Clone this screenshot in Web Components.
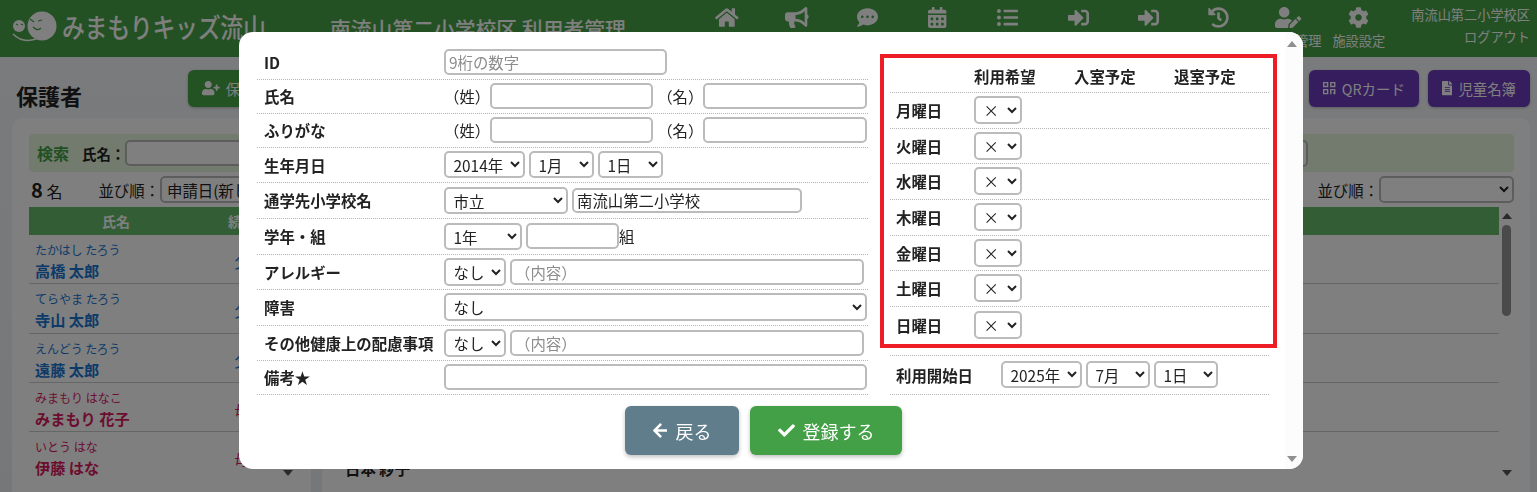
<!DOCTYPE html>
<html lang="ja">
<head>
<meta charset="utf-8">
<title>保護者</title>
<style>
  html, body { margin: 0; height: 492px; overflow: hidden; }
  body {
    font-family: "Noto Sans CJK JP", "Noto Sans", sans-serif;
    font-size: 15.4px;
    color: #222;
    background: linear-gradient(#f4f7fa, #eceff2);
  }
</style>
</head>
<body>
<app-header></app-header>
<page-toolbar></page-toolbar>
<list-area></list-area>
<modal-dialog></modal-dialog>

<script>
const ICONS = {
  home: [576, "M280.37 148.26L96 300.11V464a16 16 0 0 0 16 16l112.06-.29a16 16 0 0 0 15.92-16V368a16 16 0 0 1 16-16h64a16 16 0 0 1 16 16v95.64a16 16 0 0 0 16 16.05L464 480a16 16 0 0 0 16-16V300L295.67 148.26a12.19 12.19 0 0 0-15.3 0zM571.6 251.47L488 182.56V44.05a12 12 0 0 0-12-12h-56a12 12 0 0 0-12 12v72.61L318.47 43a48 48 0 0 0-61 0L4.34 251.47a12 12 0 0 0-1.6 16.9l25.5 31A12 12 0 0 0 45.15 301l235.22-193.74a12.19 12.19 0 0 1 15.3 0L530.9 301a12 12 0 0 0 16.9-1.6l25.5-31a12 12 0 0 0-1.7-16.93z"],
  bullhorn: [576, "M576 240c0-23.63-12.95-44.04-32-55.12V32.01C544 23.26 537.02 0 512 0c-7.12 0-14.19 2.38-19.98 7.02l-85.03 68.03C364.28 109.19 310.66 128 256 128H64c-35.35 0-64 28.65-64 64v96c0 35.35 28.65 64 64 64h33.7c-1.39 10.48-2.18 21.14-2.18 32 0 39.77 9.26 77.35 25.56 110.94 5.19 10.69 16.52 17.06 28.4 17.06h74.28c26.05 0 41.69-29.84 25.9-50.56-16.4-21.52-26.15-48.36-26.15-77.44 0-11.11 1.62-21.79 4.41-32H256c54.66 0 108.28 18.81 150.98 52.95l85.03 68.03a32.023 32.023 0 0 0 19.98 7.02c24.92 0 32-22.78 32-32V295.13C563.05 284.04 576 263.63 576 240zm-96 141.42l-33.05-26.44C392.95 311.78 325.12 288 256 288v-96c69.12 0 136.95-23.78 190.95-66.98L480 98.58v282.84z"],
  comment: [512, "M256 32C114.6 32 0 125.1 0 240c0 49.6 21.4 95 57 130.7C44.5 421.1 2.7 466 2.2 466.5c-2.2 2.3-2.8 5.7-1.5 8.7S4.8 480 8 480c66.3 0 116-31.8 140.6-51.4 32.7 12.3 69 19.4 107.4 19.4 141.4 0 256-93.1 256-208S397.4 32 256 32zM128 272c-17.7 0-32-14.3-32-32s14.3-32 32-32 32 14.3 32 32-14.3 32-32 32zm128 0c-17.7 0-32-14.3-32-32s14.3-32 32-32 32 14.3 32 32-14.3 32-32 32zm128 0c-17.7 0-32-14.3-32-32s14.3-32 32-32 32 14.3 32 32-14.3 32-32 32z"],
  calendar: [448, "M0 464c0 26.5 21.5 48 48 48h352c26.5 0 48-21.5 48-48V192H0v272zm320-196c0-6.6 5.4-12 12-12h40c6.6 0 12 5.4 12 12v40c0 6.6-5.4 12-12 12h-40c-6.6 0-12-5.4-12-12v-40zm0 128c0-6.6 5.4-12 12-12h40c6.6 0 12 5.4 12 12v40c0 6.6-5.4 12-12 12h-40c-6.6 0-12-5.4-12-12v-40zM192 268c0-6.6 5.4-12 12-12h40c6.6 0 12 5.4 12 12v40c0 6.6-5.4 12-12 12h-40c-6.6 0-12-5.4-12-12v-40zm0 128c0-6.6 5.4-12 12-12h40c6.6 0 12 5.4 12 12v40c0 6.6-5.4 12-12 12h-40c-6.6 0-12-5.4-12-12v-40zM64 268c0-6.6 5.4-12 12-12h40c6.6 0 12 5.4 12 12v40c0 6.6-5.4 12-12 12H76c-6.6 0-12-5.4-12-12v-40zm0 128c0-6.6 5.4-12 12-12h40c6.6 0 12 5.4 12 12v40c0 6.6-5.4 12-12 12H76c-6.6 0-12-5.4-12-12v-40zM400 64h-48V16c0-8.8-7.2-16-16-16h-32c-8.8 0-16 7.2-16 16v48H160V16c0-8.8-7.2-16-16-16h-32c-8.8 0-16 7.2-16 16v48H48C21.5 64 0 85.5 0 112v48h448v-48c0-26.5-21.5-48-48-48z"],
  list: [512, "M48 48a48 48 0 1 0 48 48 48 48 0 0 0-48-48zm0 160a48 48 0 1 0 48 48 48 48 0 0 0-48-48zm0 160a48 48 0 1 0 48 48 48 48 0 0 0-48-48zm448 16H176a16 16 0 0 0-16 16v32a16 16 0 0 0 16 16h320a16 16 0 0 0 16-16v-32a16 16 0 0 0-16-16zm0-320H176a16 16 0 0 0-16 16v32a16 16 0 0 0 16 16h320a16 16 0 0 0 16-16V80a16 16 0 0 0-16-16zm0 160H176a16 16 0 0 0-16 16v32a16 16 0 0 0 16 16h320a16 16 0 0 0 16-16v-32a16 16 0 0 0-16-16z"],
  signin: [512, "M416 448h-84c-6.6 0-12-5.4-12-12v-40c0-6.6 5.4-12 12-12h84c17.7 0 32-14.3 32-32V160c0-17.7-14.3-32-32-32h-84c-6.6 0-12-5.4-12-12V76c0-6.6 5.4-12 12-12h84c53 0 96 43 96 96v192c0 53-43 96-96 96zm-47-201L201 79c-15-15-41-4.5-41 17v96H24c-13.3 0-24 10.7-24 24v96c0 13.3 10.7 24 24 24h136v96c0 21.5 26 32 41 17l168-168c9.3-9.4 9.3-24.6 0-34z"],
  history: [512, "M504 255.531c.253 136.64-111.18 248.372-247.82 248.468-59.015.042-113.223-20.53-155.822-54.911-11.077-8.94-11.905-25.541-1.839-35.607l11.267-11.267c8.609-8.609 22.353-9.551 31.891-1.984C173.062 425.135 212.781 440 256 440c101.705 0 184-82.311 184-184 0-101.705-82.311-184-184-184-48.814 0-93.149 18.969-126.068 49.932l50.754 50.754c10.08 10.08 2.941 27.314-11.313 27.314H24c-8.837 0-16-7.163-16-16V38.627c0-14.254 17.234-21.393 27.314-11.314l49.372 49.372C129.209 34.136 189.552 8 256 8c136.81 0 247.747 110.78 248 247.531zm-180.912 78.784l9.823-12.63c8.138-10.463 6.253-25.542-4.21-33.679L288 256.349V152c0-13.255-10.745-24-24-24h-16c-13.255 0-24 10.745-24 24v135.651l65.409 50.874c10.463 8.137 25.541 6.253 33.679-4.21z"],
  useredit: [640, "M224 256c70.7 0 128-57.3 128-128S294.7 0 224 0 96 57.3 96 128s57.3 128 128 128zm89.6 32h-16.7c-22.2 10.2-46.9 16-72.9 16s-50.6-5.8-72.9-16h-16.7C60.2 288 0 348.2 0 422.4V464c0 26.5 21.5 48 48 48h274.9c-2.4-6.8-3.4-14-2.6-21.3l6.8-60.9 1.2-11.1 7.9-7.9 77.3-77.3c-24.5-27.7-60-45.5-99.9-45.5zm45.3 145.3l-6.8 61c-1.1 10.2 7.5 18.8 17.6 17.6l60.9-6.8 137.9-137.9-71.7-71.7-137.9 137.8zM633 268.9L595.1 231c-9.3-9.3-24.5-9.3-33.8 0l-37.8 37.8-4.1 4.1 71.8 71.7 41.8-41.8c9.2-9.4 9.2-24.5 0-33.9z"],
  cog: [512, "M487.4 315.7l-42.6-24.6c4.3-23.2 4.3-47 0-70.2l42.6-24.6c4.9-2.8 7.1-8.6 5.5-14-11.1-35.6-30-67.8-54.7-94.6-3.8-4.1-10-5.1-14.8-2.3L380.8 110c-17.9-15.4-38.5-27.3-60.8-35.1V25.8c0-5.6-3.9-10.5-9.4-11.7-36.7-8.2-74.3-7.8-109.2 0-5.5 1.2-9.4 6.1-9.4 11.7V75c-22.2 7.9-42.8 19.8-60.8 35.1L88.7 85.5c-4.9-2.8-11-1.9-14.8 2.3-24.7 26.7-43.6 58.9-54.7 94.6-1.7 5.4.6 11.2 5.5 14L67.3 221c-4.3 23.2-4.3 47 0 70.2l-42.6 24.6c-4.9 2.8-7.1 8.6-5.5 14 11.1 35.6 30 67.8 54.7 94.6 3.8 4.1 10 5.1 14.8 2.3l42.6-24.6c17.9 15.4 38.5 27.3 60.8 35.1v49.2c0 5.6 3.9 10.5 9.4 11.7 36.7 8.2 74.3 7.8 109.2 0 5.5-1.2 9.4-6.1 9.4-11.7v-49.2c22.2-7.9 42.8-19.8 60.8-35.1l42.6 24.6c4.9 2.8 11 1.9 14.8-2.3 24.7-26.7 43.6-58.9 54.7-94.6 1.5-5.5-.7-11.3-5.6-14.1zM256 336c-44.1 0-80-35.9-80-80s35.9-80 80-80 80 35.9 80 80-35.9 80-80 80z"],
  userplus: [640, "M624 208h-64v-64c0-8.8-7.2-16-16-16h-32c-8.8 0-16 7.2-16 16v64h-64c-8.8 0-16 7.2-16 16v32c0 8.8 7.2 16 16 16h64v64c0 8.8 7.2 16 16 16h32c8.8 0 16-7.2 16-16v-64h64c8.8 0 16-7.2 16-16v-32c0-8.8-7.2-16-16-16zm-400 48c70.7 0 128-57.3 128-128S294.7 0 224 0 96 57.3 96 128s57.3 128 128 128zm89.6 32h-16.7c-22.2 10.2-46.9 16-72.9 16s-50.6-5.8-72.9-16h-16.7C60.2 288 0 348.2 0 422.4V464c0 26.5 21.5 48 48 48h352c26.5 0 48-21.5 48-48v-41.6c0-74.2-60.2-134.4-134.4-134.4z"],
  arrowleft: [448, "M257.5 445.1l-22.2 22.2c-9.4 9.4-24.6 9.4-33.9 0L7 273c-9.4-9.4-9.4-24.6 0-33.9L201.4 44.7c9.4-9.4 24.6-9.4 33.9 0l22.2 22.2c9.5 9.5 9.3 25-.4 34.3L136.6 216H424c13.3 0 24 10.7 24 24v32c0 13.3-10.7 24-24 24H136.6l120.5 114.8c9.8 9.3 10 24.8.4 34.3z"],
  check: [512, "M173.898 439.404l-166.4-166.4c-9.997-9.997-9.997-26.206 0-36.204l36.203-36.204c9.997-9.998 26.207-9.998 36.204 0L192 312.69 432.095 72.596c9.997-9.997 26.207-9.997 36.204 0l36.203 36.204c9.997 9.997 9.997 26.206 0 36.204l-294.4 294.401c-9.998 9.997-26.207 9.997-36.204-.001z"],
  file: [384, "M224 136V0H24C10.7 0 0 10.7 0 24v464c0 13.3 10.7 24 24 24h336c13.3 0 24-10.7 24-24V160H248c-13.2 0-24-10.8-24-24zm64 236c0 6.6-5.4 12-12 12H108c-6.6 0-12-5.4-12-12v-8c0-6.6 5.4-12 12-12h168c6.6 0 12 5.4 12 12v8zm0-64c0 6.6-5.4 12-12 12H108c-6.6 0-12-5.4-12-12v-8c0-6.6 5.4-12 12-12h168c6.6 0 12 5.4 12 12v8zm0-72v8c0 6.6-5.4 12-12 12H108c-6.6 0-12-5.4-12-12v-8c0-6.6 5.4-12 12-12h168c6.6 0 12 5.4 12 12zm96-114.1v6.1H256V0h6.1c6.4 0 12.5 2.5 17 7l97.9 98c4.5 4.5 7 10.6 7 16.9z"],
  qr: [448, "M0 32h192v192H0V32zm50 50v92h92V82H50zM256 32h192v192H256V32zm50 50v92h92V82h-92zM0 288h192v192H0V288zm50 50v92h92v-92H50zM256 288h192v96h-50v-46h-92v142h-50V288zm120 96h72v96h-72v-96z"],
};

class FaIcon extends HTMLElement {
  connectedCallback() {
    const [w, d] = ICONS[this.getAttribute("name")];
    const size = Number(this.getAttribute("size")) || 16;
    this.attachShadow({ mode: "open" });
    this.shadowRoot.innerHTML = `
      <style>
      :host { display: inline-flex; flex: none; }
      svg { display: block; fill: currentColor; }
      </style>
      <svg width="${(w / 512) * size}" height="${size}" viewBox="0 0 ${w} 512"><path d="${d}"/></svg>`;
  }
}

class TextBox extends HTMLElement {
  connectedCallback() {
    const width = this.getAttribute("width");
    const height = this.getAttribute("height") || 26;
    const placeholder = this.getAttribute("placeholder") || "";
    const value = this.getAttribute("value") || "";
    this.attachShadow({ mode: "open" });
    this.shadowRoot.innerHTML = `
      <style>
      :host { display: block; flex: none; }
      input {
        display: block;
        box-sizing: border-box;
        width: ${width}px;
        height: ${height}px;
        padding: 0 3px;
        border: 2px solid #bbb;
        border-radius: 5px;
        background: #fff;
        color: #222;
        font: 15.4px "Noto Sans CJK JP", "Noto Sans", sans-serif;
        outline: none;
      }
      input::placeholder { color: #8c8c8c; opacity: 1; }
      </style>
      <input type="text" placeholder="${placeholder}" value="${value}">`;
  }
}

class PickBox extends HTMLElement {
  connectedCallback() {
    const width = this.getAttribute("width");
    const height = this.getAttribute("height") || 27;
    const pad = this.getAttribute("pad") || 3.5;
    const options = (this.getAttribute("options") || "")
      .split(",")
      .map((o) => `<option>${o}</option>`)
      .join("");
    this.attachShadow({ mode: "open" });
    this.shadowRoot.innerHTML = `
      <style>
      :host { display: block; flex: none; }
      select {
        display: block;
        box-sizing: border-box;
        width: ${width}px;
        height: ${height}px;
        padding: 0 ${pad}px;
        border: 2px solid #bbb;
        border-radius: 5px;
        background-color: #fff;
        color: #222;
        font: 15.4px "Noto Sans CJK JP", "Noto Sans", sans-serif;
        outline: none;
      }
      </style>
      <select>${options}</select>`;
  }
}

class NavItem extends HTMLElement {
  connectedCallback() {
    const label = this.getAttribute("label") || "";
    this.attachShadow({ mode: "open" });
    this.shadowRoot.innerHTML = `
      <style>
      :host {
        display: flex;
        flex-direction: column;
        align-items: center;
        width: 70.2px;
        height: 57px;
        padding-top: 7px;
        box-sizing: border-box;
        color: #fff;
      }
      .icon { height: 22px; display: flex; align-items: flex-start; }
      .label { margin-top: 2px; font-size: 13.2px; line-height: 20px; white-space: nowrap; }
      </style>
      <div class="icon"><fa-icon name="${this.getAttribute("icon")}" size="21"></fa-icon></div>
      <div class="label">${label}</div>`;
  }
}

class AppHeader extends HTMLElement {
  connectedCallback() {
    this.attachShadow({ mode: "open" });
    this.shadowRoot.innerHTML = `
      <style>
      :host {
        display: flex;
        align-items: flex-start;
        height: 57px;
        background: #46a246;
        color: #fff;
      }
      .logo { display: flex; align-items: center; width: 330px; height: 57px; box-sizing: border-box; padding: 0 0 3px 12px; gap: 4px; }
      .brand { font-size: 27px; font-weight: 500; letter-spacing: -.4px; line-height: 30px; white-space: nowrap; transform: scaleX(.85); transform-origin: left center; }
      .title { width: 362px; padding-top: 13px; font-size: 20.8px; font-weight: 500; line-height: 30px; white-space: nowrap; overflow: hidden; }
      nav { display: flex; }
      .user { flex: 1; padding: 4px 7px 0 0; text-align: right; font-size: 13.2px; line-height: 22px; }
      svg { display: block; flex: none; }
      </style>
      <div class="logo">
        <svg width="46" height="34" viewBox="0 0 46 34">
          <circle cx="7" cy="16" r="6" fill="#fff"/>
          <circle cx="30" cy="16" r="14.5" fill="#fff"/>
          <path d="M1 24c6 6 14 8 23 5" fill="none" stroke="#fff" stroke-width="1.6"/>
          <path d="M4 14l2 1M9 14l2 1M18 9l4 3M26 11l4-1M21 17c3 3 6 3 8 1" fill="none" stroke="#46a246" stroke-width="1.2"/>
        </svg>
        <span class="brand">みまもりキッズ流山</span>
      </div>
      <div class="title">南流山第二小学校区 利用者管理</div>
      <nav>
        <nav-item icon="home"></nav-item>
        <nav-item icon="bullhorn"></nav-item>
        <nav-item icon="comment"></nav-item>
        <nav-item icon="calendar"></nav-item>
        <nav-item icon="list"></nav-item>
        <nav-item icon="signin"></nav-item>
        <nav-item icon="signin"></nav-item>
        <nav-item icon="history"></nav-item>
        <nav-item icon="useredit" label="利用者管理"></nav-item>
        <nav-item icon="cog" label="施設設定"></nav-item>
      </nav>
      <div class="user">南流山第二小学校区<br>ログアウト</div>`;
  }
}

class ToolButton extends HTMLElement {
  connectedCallback() {
    const bg = this.getAttribute("bg");
    this.attachShadow({ mode: "open" });
    this.shadowRoot.innerHTML = `
      <style>
      :host {
        display: flex;
        align-items: center;
        gap: 6px;
        height: 37px;
        padding: 0 14px;
        box-sizing: border-box;
        border-radius: 6px;
        background: ${bg};
        color: #fff;
        font-size: 14.4px;
        box-shadow: 0 1px 3px rgba(0,0,0,.25);
      }
      </style>
      <fa-icon name="${this.getAttribute("icon")}" size="14.2"></fa-icon><slot></slot>`;
  }
}

class PageToolbar extends HTMLElement {
  connectedCallback() {
    this.attachShadow({ mode: "open" });
    this.shadowRoot.innerHTML = `
      <style>
      :host {
        display: flex;
        align-items: flex-start;
        gap: 9px;
        height: 61px;
        box-sizing: border-box;
        padding: 13px 7px 0 16px;
      }
      h1 { margin: 0; width: 163px; padding-top: 9px; font-size: 22px; line-height: 32px; font-weight: 700; color: #222; }
      .add { margin-right: auto; }
      </style>
      <h1>保護者</h1>
      <tool-button class="add" icon="userplus" bg="#46a546">保護者登録</tool-button>
      <tool-button icon="qr" bg="#6a3abc">QRカード</tool-button>
      <tool-button icon="file" bg="#6a3abc">児童名簿</tool-button>`;
  }
}

class PersonRow extends HTMLElement {
  connectedCallback() {
    const color = this.getAttribute("color") || "#222";
    this.attachShadow({ mode: "open" });
    this.shadowRoot.innerHTML = `
      <style>
      :host {
        display: grid;
        grid-template-columns: 174px 78px;
        height: 49.3px;
        box-sizing: border-box;
        border-bottom: 1px solid #ccc;
        color: ${color};
      }
      .name { padding: 5px 0 0 6px; }
      .kana { font-size: 12px; line-height: 20px; white-space: nowrap; }
      .full { font-size: 15.2px; font-weight: 700; line-height: 20px; white-space: nowrap; }
      .rel { padding-top: 15px; text-align: center; font-size: 15.2px; line-height: 22px; }
      </style>
      <div class="name">
        <div class="kana">${this.getAttribute("kana")}</div>
        <div class="full">${this.getAttribute("full")}</div>
      </div>
      <div class="rel">${this.getAttribute("rel")}</div>`;
  }
}

class ScrollRail extends HTMLElement {
  connectedCallback() {
    const thumb = this.hasAttribute("thumb") ? '<div class="thumb"></div>' : "";
    this.attachShadow({ mode: "open" });
    this.shadowRoot.innerHTML = `
      <style>
      :host {
        display: flex;
        flex-direction: column;
        align-items: center;
        flex: none;
        width: 15px;
        box-sizing: border-box;
        padding: 6px 0 4px;
      }
      .up, .down { width: 0; height: 0; border: 5px solid transparent; border-top: 0; }
      .up { border-bottom: 6px solid var(--arrow, #8f8f8f); }
      .down { margin-top: auto; border: 5px solid transparent; border-bottom: 0; border-top: 6px solid var(--arrow, #8f8f8f); }
      .thumb { width: 9px; height: 91px; margin-top: 6px; border-radius: 5px; background: #949494; }
      </style>
      <div class="up"></div>${thumb}<div class="down"></div>`;
  }
}

class PersonPanel extends HTMLElement {
  connectedCallback() {
    this.attachShadow({ mode: "open" });
    this.shadowRoot.innerHTML = `
      <style>
      :host {
        display: block;
        box-sizing: border-box;
        height: 374px;
        padding: 16px 16px 0 17px;
        background: #fff;
        border-radius: 10px 10px 0 0;
      }
      .search {
        display: flex;
        align-items: center;
        height: 38px;
        padding-left: 8px;
        box-sizing: border-box;
        border-radius: 4px;
        background: #e6f6dc;
        white-space: nowrap;
      }
      .search b.lead { color: #43a047; font-size: 16px; margin-right: 13px; }
      .search b { font-size: 14.4px; }
      .sort { display: flex; align-items: center; height: 35px; }
      .order { font-size: 15.4px; margin-left: auto; white-space: nowrap; }
      .body { display: flex; height: 273px; }
      .table { flex: 1; min-width: 0; overflow: hidden; }
      </style>
      <div class="search">
        <b class="lead">検索</b><b>氏名：</b><slot name="search"></slot>
      </div>
      <div class="sort"><slot name="count"></slot><span class="order">並び順：</span><slot name="order"></slot></div>
      <div class="body">
        <div class="table">
          <slot name="head"></slot>
          <slot></slot>
        </div>
        <scroll-rail ${this.hasAttribute("thumb") ? "thumb" : ""} style="--arrow:#555"></scroll-rail>
      </div>`;
  }
}

class ListArea extends HTMLElement {
  connectedCallback() {
    const people = [
      ["たかはし たろう", "高橋 太郎", "父", "#1976d2"],
      ["てらやま たろう", "寺山 太郎", "父", "#1976d2"],
      ["えんどう たろう", "遠藤 太郎", "父", "#1976d2"],
      ["みまもり はなこ", "みまもり 花子", "母", "#d81b60"],
      ["いとう はな", "伊藤 はな", "母", "#d81b60"],
    ];
    const rows = people
      .map(
        ([kana, full, rel, color]) =>
          `<person-row kana="${kana}" full="${full}" rel="${rel}" color="${color}"></person-row>`
      )
      .join("");
    const plainRow = `<div style="height:49.3px;box-sizing:border-box;border-bottom:1px solid #ccc"></div>`;
    this.attachShadow({ mode: "open" });
    this.shadowRoot.innerHTML = `
      <style>
      :host {
        display: grid;
        grid-template-columns: 299px 1208px;
        gap: 11px;
        padding-left: 12px;
      }
      .count { font-size: 16px; margin-left: 2px; }
      .count b { font-size: 20px; }
      .head {
        height: 28px;
        display: grid;
        grid-template-columns: 174px 78px;
        background: #66bb6a;
        color: #fff;
        font-size: 14px;
        font-weight: 700;
        line-height: 28px;
        text-align: center;
      }
      .other { padding: 25px 0 0 6px; height: 49px; box-sizing: border-box; font-weight: 700; line-height: 22px; color: #222; }
      </style>
      <person-panel>
        <text-box slot="search" width="140" height="26"></text-box>
        <span slot="count" class="count"><b>8</b> 名</span>
        <pick-box slot="order" width="135" height="27" pad="1" options="申請日(新しい順)"></pick-box>
        <div slot="head" class="head"><span>氏名</span><span>続柄</span></div>
        ${rows}
      </person-panel>
      <person-panel thumb>
        <pick-box slot="search" width="150" height="27" style="margin-left:723px" options=""></pick-box>
        <pick-box slot="order" width="135" height="27" options=""></pick-box>
        <div slot="head" class="head"></div>
        ${plainRow}${plainRow}${plainRow}${plainRow}
        <div class="other">日本 紗子</div>
      </person-panel>`;
  }
}

class FormRow extends HTMLElement {
  connectedCallback() {
    const height = this.getAttribute("height") || 34;
    const labelWidth = this.getAttribute("label-width") || 187;
    const labelPad = this.getAttribute("label-pad") || 7;
    this.attachShadow({ mode: "open" });
    this.shadowRoot.innerHTML = `
      <style>
      :host {
        display: flex;
        align-items: center;
        height: ${height}px;
        box-sizing: border-box;
        padding-bottom: 1px;
        border-bottom: 1px dotted #b5b5b5;
      }
      .label {
        flex: none;
        width: ${labelWidth}px;
        box-sizing: border-box;
        padding-left: ${labelPad}px;
        font-weight: 700;
        white-space: nowrap;
      }
      .fields { display: flex; align-items: center; gap: 4px; white-space: nowrap; }
      </style>
      <div class="label">${this.getAttribute("label") || ""}</div>
      <div class="fields"><slot></slot></div>`;
  }
}

class WeekTable extends HTMLElement {
  connectedCallback() {
    const heights = [36, 35, 36, 36, 35, 36, 37];
    const days = ["月", "火", "水", "木", "金", "土", "日"];
    const rows = days
      .map(
        (d, i) => `
        <div class="row${i === 6 ? " last" : ""}" style="height:${heights[i]}px">
          <b>${d}曜日</b>
          <pick-box width="48" height="28" options="×,○"></pick-box>
        </div>`
      )
      .join("");
    this.attachShadow({ mode: "open" });
    this.shadowRoot.innerHTML = `
      <style>
      :host {
        display: block;
        box-sizing: border-box;
        width: 397px;
        margin-top: 9px;
        padding: 0 4px 0 6px;
        border: 4px solid #ee1c25;
      }
      .head, .row {
        display: grid;
        grid-template-columns: 84px 100px 100px 1fr;
        align-items: center;
        box-sizing: border-box;
        border-bottom: 1px dotted #b5b5b5;
      }
      .head { height: 35px; padding-top: 2px; }
      .row { padding-bottom: 1px; }
      .head b, .row b { font-weight: 700; }
      .row b { padding-left: 6px; }
      .last { border-bottom: 0; }
      </style>
      <div class="head"><span></span><b>利用希望</b><b>入室予定</b><b>退室予定</b></div>
      ${rows}`;
  }
}

class ActionButton extends HTMLElement {
  connectedCallback() {
    this.attachShadow({ mode: "open" });
    this.shadowRoot.innerHTML = `
      <style>
      :host {
        display: flex;
        align-items: center;
        justify-content: center;
        gap: 8px;
        height: 49px;
        width: ${this.getAttribute("width")}px;
        border-radius: 6px;
        background: ${this.getAttribute("bg")};
        color: #fff;
        font-size: 18px;
        box-shadow: 0 2px 4px rgba(0,0,0,.25);
      }
      </style>
      <fa-icon name="${this.getAttribute("icon")}" size="17"></fa-icon><slot></slot>`;
  }
}

class ModalDialog extends HTMLElement {
  connectedCallback() {
    this.attachShadow({ mode: "open" });
    this.shadowRoot.innerHTML = `
      <style>
      :host {
        position: fixed;
        inset: 0;
        background: rgba(0,0,0,.5);
      }
      .panel {
        position: absolute;
        left: 239px;
        top: 32px;
        width: 1064px;
        height: 437px;
        display: flex;
        border-radius: 14px;
        overflow: hidden;
        background: #fff;
      }
      .content { flex: 1; min-width: 0; padding: 13px 0 0 18px; }
      .columns { display: flex; gap: 12px; }
      .left { width: 611px; flex: none; }
      .right { width: 397px; flex: none; }
      .start { margin: 0 8px 0 10px; height: 7px; border-bottom: 1px dotted #b5b5b5; }
      .below { margin: 0 8px 0 10px; }
      .actions { display: flex; justify-content: center; gap: 11px; width: 1013px; margin-top: 11px; }
      scroll-rail { width: 18px; background: #fcfcfc; padding: 9px 4px 7px 0; }
      span.paren { flex: none; margin-right: -4px; }
      </style>
      <div class="panel">
        <div class="content">
          <div class="columns">
            <div class="left">
              <form-row label="ID" height="35"><text-box width="223" placeholder="9桁の数字"></text-box></form-row>
              <form-row label="氏名">
                <span class="paren">（姓）</span><text-box width="163"></text-box>
                <span class="paren">（名）</span><text-box width="164"></text-box>
              </form-row>
              <form-row label="ふりがな">
                <span class="paren">（姓）</span><text-box width="163"></text-box>
                <span class="paren">（名）</span><text-box width="164"></text-box>
              </form-row>
              <form-row label="生年月日" height="35">
                <pick-box width="81" options="2014年"></pick-box>
                <pick-box width="65" options="1月"></pick-box>
                <pick-box width="65" options="1日"></pick-box>
              </form-row>
              <form-row label="通学先小学校名" height="36">
                <pick-box width="124" options="市立"></pick-box>
                <text-box width="230" height="25" value="南流山第二小学校"></text-box>
              </form-row>
              <form-row label="学年・組" height="36">
                <pick-box width="78" options="1年"></pick-box>
                <text-box width="93"></text-box><span style="margin-left:-4px">組</span>
              </form-row>
              <form-row label="アレルギー" height="35">
                <pick-box width="62" height="28" options="なし"></pick-box>
                <text-box width="354" placeholder="（内容）"></text-box>
              </form-row>
              <form-row label="障害" height="36"><pick-box width="423" height="28" options="なし"></pick-box></form-row>
              <form-row label="その他健康上の配慮事項" height="35">
                <pick-box width="62" height="28" options="なし"></pick-box>
                <text-box width="354" placeholder="（内容）"></text-box>
              </form-row>
              <form-row label="備考★"><text-box width="423"></text-box></form-row>
            </div>
            <div class="right">
              <week-table></week-table>
              <div class="start"></div>
              <div class="below">
                <form-row label="利用開始日" label-width="111" label-pad="6" height="39">
                  <pick-box width="81" options="2025年"></pick-box>
                  <pick-box width="64" options="7月"></pick-box>
                  <pick-box width="64" options="1日"></pick-box>
                </form-row>
              </div>
            </div>
          </div>
          <div class="actions">
            <action-button width="114" bg="#607d8b" icon="arrowleft">戻る</action-button>
            <action-button width="152" bg="#43a047" icon="check">登録する</action-button>
          </div>
        </div>
        <scroll-rail></scroll-rail>
      </div>`;
  }
}

customElements.define("fa-icon", FaIcon);
customElements.define("text-box", TextBox);
customElements.define("pick-box", PickBox);
customElements.define("nav-item", NavItem);
customElements.define("app-header", AppHeader);
customElements.define("tool-button", ToolButton);
customElements.define("page-toolbar", PageToolbar);
customElements.define("person-row", PersonRow);
customElements.define("scroll-rail", ScrollRail);
customElements.define("person-panel", PersonPanel);
customElements.define("list-area", ListArea);
customElements.define("form-row", FormRow);
customElements.define("week-table", WeekTable);
customElements.define("action-button", ActionButton);
customElements.define("modal-dialog", ModalDialog);
</script>
</body>
</html>
